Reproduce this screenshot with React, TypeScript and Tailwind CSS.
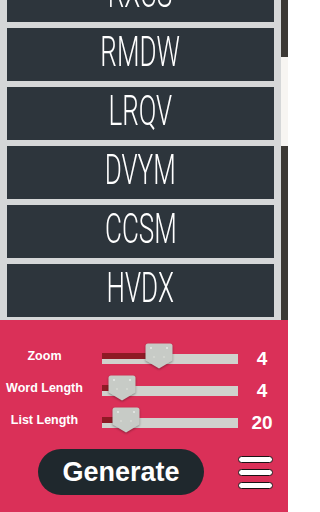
import React from "react";

const words = ["RXCS", "RMDW", "LRQV", "DVYM", "CCSM", "HVDX"];

const sliders = [
  { label: "Zoom", value: 4, pos: 43 },
  { label: "Word Length", value: 4, pos: 6 },
  { label: "List Length", value: 20, pos: 10 },
];

const Thumb = () => (
  <svg width="28" height="26" viewBox="0 0 28 26" className="drop-shadow-[0_1px_1px_rgba(0,0,0,0.35)]">
    <path d="M3 0.5 H25 Q27.5 0.5 27.5 3 V17.5 L14 25.5 L0.5 17.5 V3 Q0.5 0.5 3 0.5 Z" fill="#c7cbc6" />
    <circle cx="6" cy="5" r="1" fill="#e9ebe8" />
    <circle cx="22" cy="5" r="1" fill="#e9ebe8" />
    <circle cx="9" cy="14" r="0.9" fill="#d8dbd6" />
    <circle cx="19" cy="14" r="0.9" fill="#d8dbd6" />
  </svg>
);

const Slider = ({ pos }: { pos: number }) => (
  <div className="relative w-[136px] h-[11px]">
    <div className="absolute left-0 right-0 top-[1px] h-[10px] bg-[#d0d1cd]" />
    <div className="absolute left-0 top-0 h-[6px] bg-[#8e1a25]" style={{ width: pos + 2 }} />
    <div className="absolute top-[-10px]" style={{ left: pos }}>
      <Thumb />
    </div>
  </div>
);

export default function App() {
  return (
    <div className="w-[288px] h-[512px] flex flex-col overflow-hidden" style={{ fontFamily: "'Liberation Sans', Arial, sans-serif" }}>
      {/* word list */}
      <div className="h-[320px] flex bg-[#d5d7d8]">
        <div className="w-[281px] h-full overflow-hidden px-[7px]">
          <div className="flex flex-col gap-[6px] -mt-[31px]">
            {words.map((w) => (
              <div key={w} className="h-[53px] shrink-0 bg-[#2d353c] flex items-center justify-center">
                <span
                  className="text-white text-[42px] leading-none font-light scale-x-[0.62] -mt-[5px]"
                  style={{ fontFamily: "Roboto, 'DejaVu Sans', sans-serif" }}
                >
                  {w}
                </span>
              </div>
            ))}
          </div>
        </div>
        <div className="w-[7px] h-full flex flex-col bg-[#3c3935]">
          <div className="h-[57px]" />
          <div className="h-[89px] bg-[#f7f5f2]" />
        </div>
      </div>

      {/* controls */}
      <div className="flex-1 bg-[#da3058] pt-[22px] flex flex-col">
        {sliders.map((s) => (
          <div key={s.label} className="h-[32px] flex items-center">
            <div className="w-[89px] text-center text-white font-bold text-[12.5px] -mt-[3px]">{s.label}</div>
            <div className="ml-[13px]">
              <Slider pos={s.pos} />
            </div>
            <div className="flex-1 text-center text-white font-bold text-[19px] pr-[2px] mt-[2px]">{s.value}</div>
          </div>
        ))}
        <div className="flex items-center mt-[11px]">
          <button className="ml-[38px] w-[166px] h-[46px] rounded-full bg-[#1f282d] text-white font-bold text-[27px] leading-none">
            Generate
          </button>
          <div className="ml-[34px] w-[35px] flex flex-col gap-[6px]">
            <div className="h-[7px] rounded-full bg-white border-[1.5px] border-[#1a1214]" />
            <div className="h-[7px] rounded-full bg-white border-[1.5px] border-[#1a1214]" />
            <div className="h-[7px] rounded-full bg-white border-[1.5px] border-[#1a1214]" />
          </div>
        </div>
      </div>
    </div>
  );
}
